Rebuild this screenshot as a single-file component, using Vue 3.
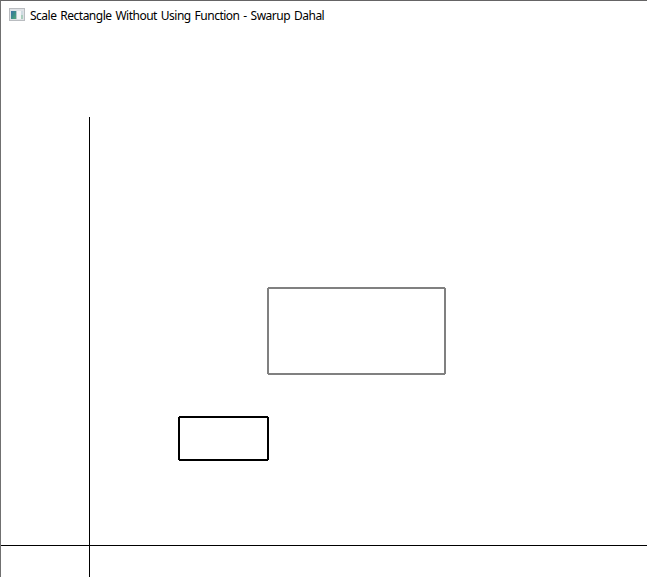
<script setup>
const rectangles = [
  { id: 'original', left: 178, top: 386, right: 267, bottom: 429, color: '#000000' },
  { id: 'scaled', left: 267, top: 257, right: 444, bottom: 343, color: '#808080' },
]

// Each side is its own butt-ended stroke, which leaves the corners notched.
const sides = (r) =>
  `M${r.left} ${r.top}H${r.right}M${r.left} ${r.bottom}H${r.right}` +
  `M${r.left} ${r.top}V${r.bottom}M${r.right} ${r.top}V${r.bottom}`
</script>

<template>
  <div class="window">
    <header class="titlebar">
      <svg class="app-icon" width="16" height="13" viewBox="0 0 16 13" shape-rendering="crispEdges">
        <defs>
          <linearGradient id="pane" x1="0" y1="0" x2="1" y2="1">
            <stop offset="0" stop-color="#3c6fa8" />
            <stop offset="0.5" stop-color="#3b8c8a" />
            <stop offset="1" stop-color="#57a878" />
          </linearGradient>
        </defs>
        <rect x="0" y="0" width="16" height="13" fill="#b9bcc0" />
        <rect x="1" y="1" width="14" height="11" fill="#dfe2e6" />
        <rect x="2" y="3" width="5" height="8" fill="url(#pane)" />
        <rect x="7" y="3" width="1" height="8" fill="#b5c6cd" />
        <rect x="8" y="3" width="4" height="8" fill="#f3f4f5" />
        <rect x="12" y="3" width="2" height="4" fill="#cfdbe2" />
        <rect x="12" y="7" width="2" height="4" fill="#a9cdbd" />
      </svg>
      <h1 class="title">Scale Rectangle Without Using Function - Swarup Dahal</h1>
    </header>
    <svg class="canvas" width="646" height="546" viewBox="0 0 646 546">
      <path d="M88.5 86V546M0 514.5H646" stroke="#000000" stroke-width="1" />
      <path
        v-for="r in rectangles"
        :key="r.id"
        :d="sides(r)"
        :stroke="r.color"
        stroke-width="2"
      />
    </svg>
  </div>
</template>

<style>
body {
  margin: 0;
  overflow: hidden;
}
</style>

<style scoped>
.window {
  box-sizing: border-box;
  width: 647px;
  height: 577px;
  border-top: 1px solid #656465;
  border-left: 1px solid #707070;
  background: #ffffff;
  overflow: hidden;
}

.titlebar {
  display: flex;
  align-items: flex-start;
  gap: 5px;
  box-sizing: border-box;
  height: 30px;
  padding: 7px 0 0 8px;
}

.app-icon {
  flex: none;
}

.title {
  margin: 0;
  font-family: "Noto Sans", "Open Sans", sans-serif;
  font-size: 12px;
  font-weight: 400;
  line-height: 16px;
  letter-spacing: -0.5px;
  word-spacing: 1.25px;
  white-space: nowrap;
  color: #000000;
}

.canvas {
  display: block;
}
</style>
